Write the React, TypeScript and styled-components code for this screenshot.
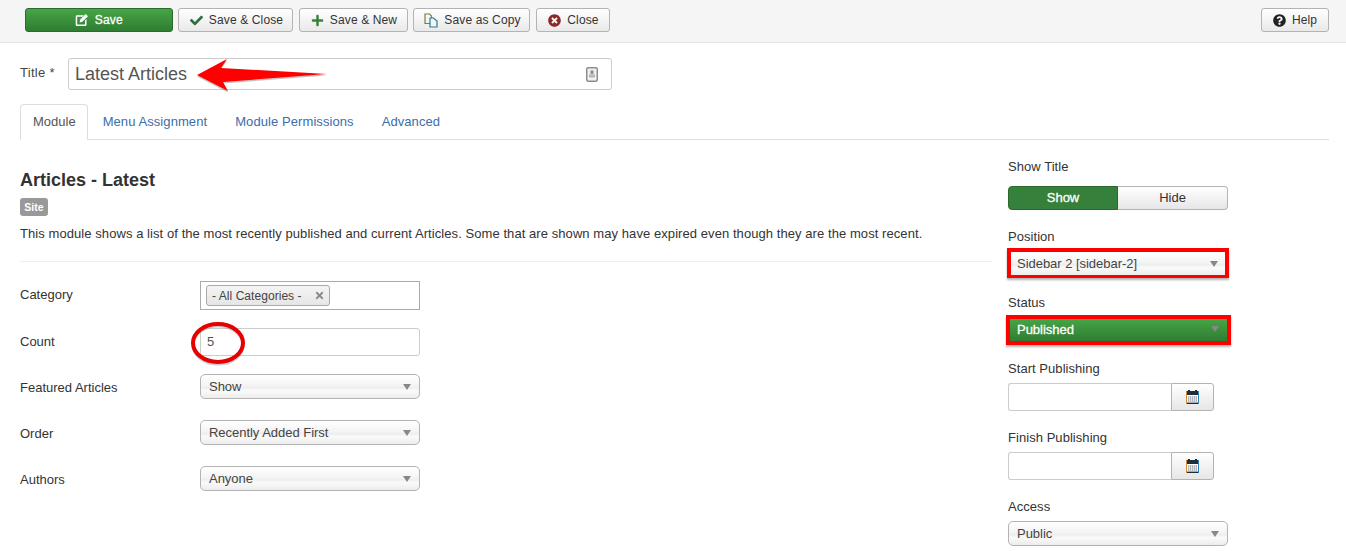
import { ReactNode } from "react";
import styled, { createGlobalStyle, css } from "styled-components";
import { FaCheck, FaPlus, FaTimes, FaQuestionCircle, FaTimesCircle } from "react-icons/fa";

const GlobalStyle = createGlobalStyle`
  html, body {
    margin: 0;
    padding: 0;
    background: #fff;
    overflow: hidden;
  }
  body {
    font-family: "Liberation Sans", Arial, sans-serif;
    font-size: 13px;
    color: #333;
  }
`;

const SaveIcon = () => (
  <svg width="14" height="14" viewBox="0 0 14 14">
    <path d="M10 7.5V11.5H2.2V3.7H7.5L9 2.2H2A1.4 1.4 0 0 0 .7 3.5V11.7A1.4 1.4 0 0 0 2 13H10.2A1.4 1.4 0 0 0 11.5 11.7V6Z" fill="#fff" />
    <path d="M4.6 9.4L5.2 6.6L10.8 1L13 3.2L7.4 8.8Z" fill="#fff" />
  </svg>
);

const CopyIcon = () => (
  <svg width="14" height="15" viewBox="0 0 14 15" fill="none">
    <path d="M1 1H5.5L7.5 3V10.5H1Z" stroke="#77803f" strokeWidth="1.2" />
    <path d="M6 5H9.5L13 8V14H6Z" fill="#f4f4f4" stroke="#2a7d8a" strokeWidth="1.2" />
  </svg>
);

const CalendarIcon = () => (
  <svg width="13" height="14" viewBox="0 0 13 14">
    <rect x="0" y="1" width="13" height="13" fill="#fff" />
    <rect x="0" y="1" width="1" height="13" fill="#d08a38" />
    <rect x="12" y="1" width="1" height="13" fill="#2f7fb8" />
    <rect x="1" y="1" width="11" height="4" fill="#1f2c3a" />
    <rect x="2" y="0" width="2" height="2" fill="#1f2c3a" />
    <rect x="9" y="0" width="2" height="2" fill="#1f2c3a" />
    <path d="M2 7H11M2 9H11M2 11H11" stroke="#6a7178" strokeWidth="1.2" strokeDasharray="1.4 .6" />
    <rect x="1" y="12.6" width="11" height="1.4" fill="#1f2c3a" />
  </svg>
);

const TitleFieldIcon = () => (
  <svg width="12" height="15" viewBox="0 0 12 15">
    <rect x=".75" y=".75" width="10.5" height="13.5" rx="1.5" fill="#f1f1f1" stroke="#8d8d8d" strokeWidth="1.5" />
    <rect x="4.5" y="3.5" width="3" height="3.5" fill="#8d8d8d" />
    <rect x="3" y="7.5" width="6" height="3" fill="#b5b5b5" />
  </svg>
);

const Arrow = () => (
  <ArrowSvg width="140" height="38" viewBox="0 0 140 38">
    <path d="M2 17L32 1L26 10L132 16L28 24L33 33Z" fill="#777" opacity=".45" transform="translate(0 1.5)" />
    <path d="M2 17L32 1L26 10L132 16L28 24L33 33Z" fill="#f00" />
  </ArrowSvg>
);

const CountCircle = () => (
  <CircleSvg width="58" height="46" viewBox="0 0 58 46">
    <ellipse cx="28" cy="24" rx="25" ry="19" fill="none" stroke="#999" strokeWidth="3" opacity=".5" />
    <ellipse cx="28" cy="22" rx="25" ry="19" fill="none" stroke="#e60000" strokeWidth="4" />
  </CircleSvg>
);

const Caret = styled.span`
  width: 0;
  height: 0;
  border-left: 4px solid transparent;
  border-right: 4px solid transparent;
  border-top: 6px solid #888;
`;

const Select = ({ children, variant }: { children: ReactNode; variant?: "marked" | "published" }) => (
  <SelectBox $variant={variant}>
    <span>{children}</span>
    <Caret />
  </SelectBox>
);

const toolbarButtons = [
  { label: "Save & Close", width: 115, icon: <FaCheck color="#2f6f3a" size={13} /> },
  { label: "Save & New", width: 109, icon: <FaPlus color="#378137" size={13} /> },
  { label: "Save as Copy", width: 117, icon: <CopyIcon /> },
  { label: "Close", width: 74, icon: <FaTimesCircle color="#8a2a2a" size={13} /> },
];

const tabs = ["Module", "Menu Assignment", "Module Permissions", "Advanced"];

export default function App() {
  return (
    <Page>
      <GlobalStyle />
      <Toolbar>
        <SaveButton>
          <SaveIcon />
          Save
        </SaveButton>
        {toolbarButtons.map((b) => (
          <ToolButton key={b.label} $width={b.width}>
            {b.icon}
            {b.label}
          </ToolButton>
        ))}
        <HelpButton $width={68}>
          <FaQuestionCircle color="#222" size={13} />
          Help
        </HelpButton>
      </Toolbar>

      <Body>
        <TitleRow>
          <TitleLabel>Title *</TitleLabel>
          <TitleInput>
            Latest Articles
            <TitleFieldIcon />
            <Arrow />
          </TitleInput>
        </TitleRow>

        <TabBar>
          {tabs.map((t, i) => (
            <Tab key={t} $active={i === 0}>
              {t}
            </Tab>
          ))}
        </TabBar>

        <Columns>
          <Main>
            <Heading>Articles - Latest</Heading>
            <Badge>Site</Badge>
            <Description>
              This module shows a list of the most recently published and current Articles. Some that are shown may have
              expired even though they are the most recent.
            </Description>
            <Divider />
            <FormRow $height={29} $mb={18}>
              <FieldLabel $shift={-1}>Category</FieldLabel>
              <ChosenBox>
                <Chip>
                  - All Categories -
                  <FaTimes size={11} color="#8a8a8a" />
                </Chip>
              </ChosenBox>
            </FormRow>
            <FormRow $height={28} $mb={18}>
              <FieldLabel $shift={-1}>Count</FieldLabel>
              <TextField>
                5
                <CountCircle />
              </TextField>
            </FormRow>
            <FormRow $height={25} $mb={21}>
              <FieldLabel $shift={1}>Featured Articles</FieldLabel>
              <Select>Show</Select>
            </FormRow>
            <FormRow $height={25} $mb={21}>
              <FieldLabel $shift={1}>Order</FieldLabel>
              <Select>Recently Added First</Select>
            </FormRow>
            <FormRow $height={25} $mb={0}>
              <FieldLabel $shift={1}>Authors</FieldLabel>
              <Select>Anyone</Select>
            </FormRow>
          </Main>

          <Side>
            <SideLabel $mb={12}>Show Title</SideLabel>
            <Toggle>
              <ToggleOption $on>Show</ToggleOption>
              <ToggleOption>Hide</ToggleOption>
            </Toggle>
            <SideLabel $mt={19} $mb={4}>Position</SideLabel>
            <Select variant="marked">Sidebar 2 [sidebar-2]</Select>
            <SideLabel $mt={17} $mb={5}>Status</SideLabel>
            <Select variant="published">Published</Select>
            <SideLabel $mt={16} $mb={7}>Start Publishing</SideLabel>
            <DateField>
              <DateInput />
              <DateButton>
                <CalendarIcon />
              </DateButton>
            </DateField>
            <SideLabel $mt={19} $mb={7}>Finish Publishing</SideLabel>
            <DateField>
              <DateInput />
              <DateButton>
                <CalendarIcon />
              </DateButton>
            </DateField>
            <SideLabel $mt={19} $mb={7}>Access</SideLabel>
            <Select>Public</Select>
          </Side>
        </Columns>
      </Body>
    </Page>
  );
}

const Page = styled.div`
  width: 1346px;
  height: 551px;
  overflow: hidden;
`;

const Toolbar = styled.header`
  box-sizing: border-box;
  height: 43px;
  padding: 8px 17px 0 25px;
  display: flex;
  align-items: flex-start;
  gap: 5.5px;
  background: #f5f5f5;
  border-bottom: 1px solid #e3e3e3;
`;

const buttonBase = css`
  box-sizing: border-box;
  height: 24px;
  display: flex;
  align-items: center;
  justify-content: center;
  border-radius: 3px;
  font-size: 12px;
  letter-spacing: 0.13px;
  white-space: nowrap;
`;

const lightOnGreen = css`
  color: #fff;
  -webkit-text-stroke: 0.3px #fff;
`;

const SaveButton = styled.div`
  ${buttonBase}
  ${lightOnGreen}
  width: 147.5px;
  gap: 6px;
  background: linear-gradient(#46a546, #2f7d32);
  border: 1px solid #2a6b2d;
`;

const ToolButton = styled.div<{ $width: number }>`
  ${buttonBase}
  width: ${({ $width }) => $width}px;
  gap: 6px;
  padding-left: 2px;
  color: #333;
  background: linear-gradient(#fff, #e9e9e9);
  border: 1px solid #b3b3b3;
`;

const HelpButton = styled(ToolButton)`
  margin-left: auto;
  padding: 0;
`;

const Body = styled.main`
  padding: 15px 17px 0 20px;
`;

const TitleRow = styled.div`
  display: flex;
  align-items: center;
  height: 32px;
`;

const TitleLabel = styled.label`
  width: 48px;
  font-size: 13px;
  letter-spacing: 0.3px;
  color: #444;
  margin-top: -4px;
`;

const TitleInput = styled.div`
  position: relative;
  box-sizing: border-box;
  width: 544px;
  height: 32px;
  display: flex;
  align-items: center;
  justify-content: space-between;
  padding: 0 13px 0 6px;
  font-size: 18px;
  color: #555;
  background: #fff;
  border: 1px solid #ccc;
  border-radius: 3px;
`;

const ArrowSvg = styled.svg`
  position: absolute;
  left: 126px;
  top: -1px;
`;

const TabBar = styled.nav`
  display: flex;
  margin-top: 14px;
  height: 36px;
  box-sizing: border-box;
  border-bottom: 1px solid #ddd;
`;

const Tab = styled.div<{ $active?: boolean }>`
  box-sizing: border-box;
  height: 36px;
  line-height: 33px;
  padding: 0 ${({ $active }) => ($active ? "11px" : "12px")} 0 12px;
  margin-right: 2px;
  font-size: 13px;
  letter-spacing: ${({ $active }) => ($active ? "0" : "0.08px")};
  border-radius: 4px 4px 0 0;
  color: ${({ $active }) => ($active ? "#555" : "#3c6ea8")};
  border: 1px solid ${({ $active }) => ($active ? "#ddd" : "transparent")};
  border-bottom-color: ${({ $active }) => ($active ? "#fff" : "transparent")};
  background: ${({ $active }) => ($active ? "#fff" : "transparent")};
`;

const Columns = styled.div`
  display: flex;
  gap: 16px;
`;

const Main = styled.section`
  width: 972px;
  padding-top: 29px;
`;

const Heading = styled.h2`
  margin: 0;
  font-size: 18px;
  line-height: 22px;
  font-weight: 700;
  color: #333;
`;

const Badge = styled.span`
  display: block;
  box-sizing: border-box;
  width: 28px;
  height: 18px;
  margin-top: 7px;
  border-radius: 3px;
  background: #999;
  color: #fff;
  font-size: 10.5px;
  font-weight: 700;
  line-height: 18px;
  text-align: center;
`;

const Description = styled.p`
  margin: 9px 0 0;
  font-size: 13px;
  line-height: 18px;
  letter-spacing: 0.07px;
  white-space: nowrap;
`;

const Divider = styled.hr`
  margin: 18px 0 19px;
  border: 0;
  border-top: 1px solid #eee;
`;

const FormRow = styled.div<{ $height: number; $mb: number }>`
  display: flex;
  align-items: center;
  height: ${({ $height }) => $height}px;
  margin-bottom: ${({ $mb }) => $mb}px;
`;

const FieldLabel = styled.label<{ $shift?: number }>`
  width: 180px;
  margin-top: ${({ $shift }) => ($shift ?? 0) * 2}px;
  font-size: 13px;
  color: #333;
`;

const ChosenBox = styled.div`
  box-sizing: border-box;
  width: 220px;
  height: 29px;
  padding: 3px 5px;
  border: 1px solid #aaa;
  background: #fff;
`;

const Chip = styled.span`
  box-sizing: border-box;
  display: inline-flex;
  align-items: center;
  gap: 12px;
  height: 21px;
  padding: 0 4px 0 5px;
  font-size: 12px;
  letter-spacing: 0.05px;
  color: #444;
  background: linear-gradient(#f4f4f4, #e6e6e6);
  border: 1px solid #aaa;
  border-radius: 3px;
`;

const TextField = styled.div`
  position: relative;
  box-sizing: border-box;
  width: 220px;
  height: 28px;
  line-height: 26px;
  padding: 0 6px;
  font-size: 13px;
  color: #555;
  background: #fff;
  border: 1px solid #ccc;
  border-radius: 3px;
`;

const CircleSvg = styled.svg`
  position: absolute;
  left: -11px;
  top: -8px;
`;

const SelectBox = styled.div<{ $variant?: "marked" | "published" }>`
  box-sizing: border-box;
  width: 220px;
  height: 25px;
  display: flex;
  align-items: center;
  justify-content: space-between;
  padding: 0 8px;
  font-size: 13px;
  letter-spacing: -0.03px;
  color: #444;
  background: linear-gradient(#fff 0, #f4f4f4 45%, #eee 55%, #fafafa 68%, #ececec 100%);
  border: 1px solid #b3b3b3;
  border-radius: 5px;
  ${({ $variant }) =>
    $variant === "marked" &&
    css`
      width: 222px;
      height: 30px;
      margin-left: -1px;
      border: solid #f00;
      border-width: 4px 4px 3px;
      border-radius: 0;
      padding: 0 7px 0 6px;
      box-shadow: 0 2px 2px rgba(0, 0, 0, 0.3);
    `}
  ${({ $variant }) =>
    $variant === "published" &&
    css`
      ${lightOnGreen}
      width: 225px;
      height: 30px;
      margin-left: -2px;
      border: 4px solid #f00;
      border-radius: 0;
      padding: 0 8px 2px 7px;
      background: linear-gradient(#46a546, #2f7d32);
      box-shadow: 0 2px 2px rgba(0, 0, 0, 0.3);
    `}
`;

const Side = styled.aside`
  width: 220px;
  padding-top: 19px;
`;

const SideLabel = styled.div<{ $mt?: number; $mb: number }>`
  height: 15px;
  line-height: 15px;
  margin-top: ${({ $mt }) => $mt ?? 0}px;
  margin-bottom: ${({ $mb }) => $mb}px;
  font-size: 13px;
  letter-spacing: 0.05px;
  color: #333;
`;

const Toggle = styled.div`
  display: flex;
  width: 220px;
  height: 24px;
`;

const ToggleOption = styled.div<{ $on?: boolean }>`
  box-sizing: border-box;
  width: 110px;
  line-height: 22px;
  text-align: center;
  font-size: 13px;
  ${({ $on }) =>
    $on
      ? css`
          ${lightOnGreen}
          background: #35803a;
          border: 1px solid #2a6b2d;
          border-radius: 4px 0 0 4px;
        `
      : css`
          color: #333;
          background: linear-gradient(#fff, #e6e6e6);
          border: 1px solid #b3b3b3;
          border-left: 0;
          border-radius: 0 4px 4px 0;
        `}
`;

const DateField = styled.div`
  display: flex;
  width: 206px;
  height: 28px;
`;

const DateInput = styled.div`
  box-sizing: border-box;
  flex: 1;
  background: #fff;
  border: 1px solid #ccc;
  border-right: 0;
  border-radius: 3px 0 0 3px;
`;

const DateButton = styled.div`
  box-sizing: border-box;
  width: 43px;
  display: flex;
  align-items: center;
  justify-content: center;
  background: linear-gradient(#fff, #e6e6e6);
  border: 1px solid #b3b3b3;
  border-radius: 0 3px 3px 0;
`;
